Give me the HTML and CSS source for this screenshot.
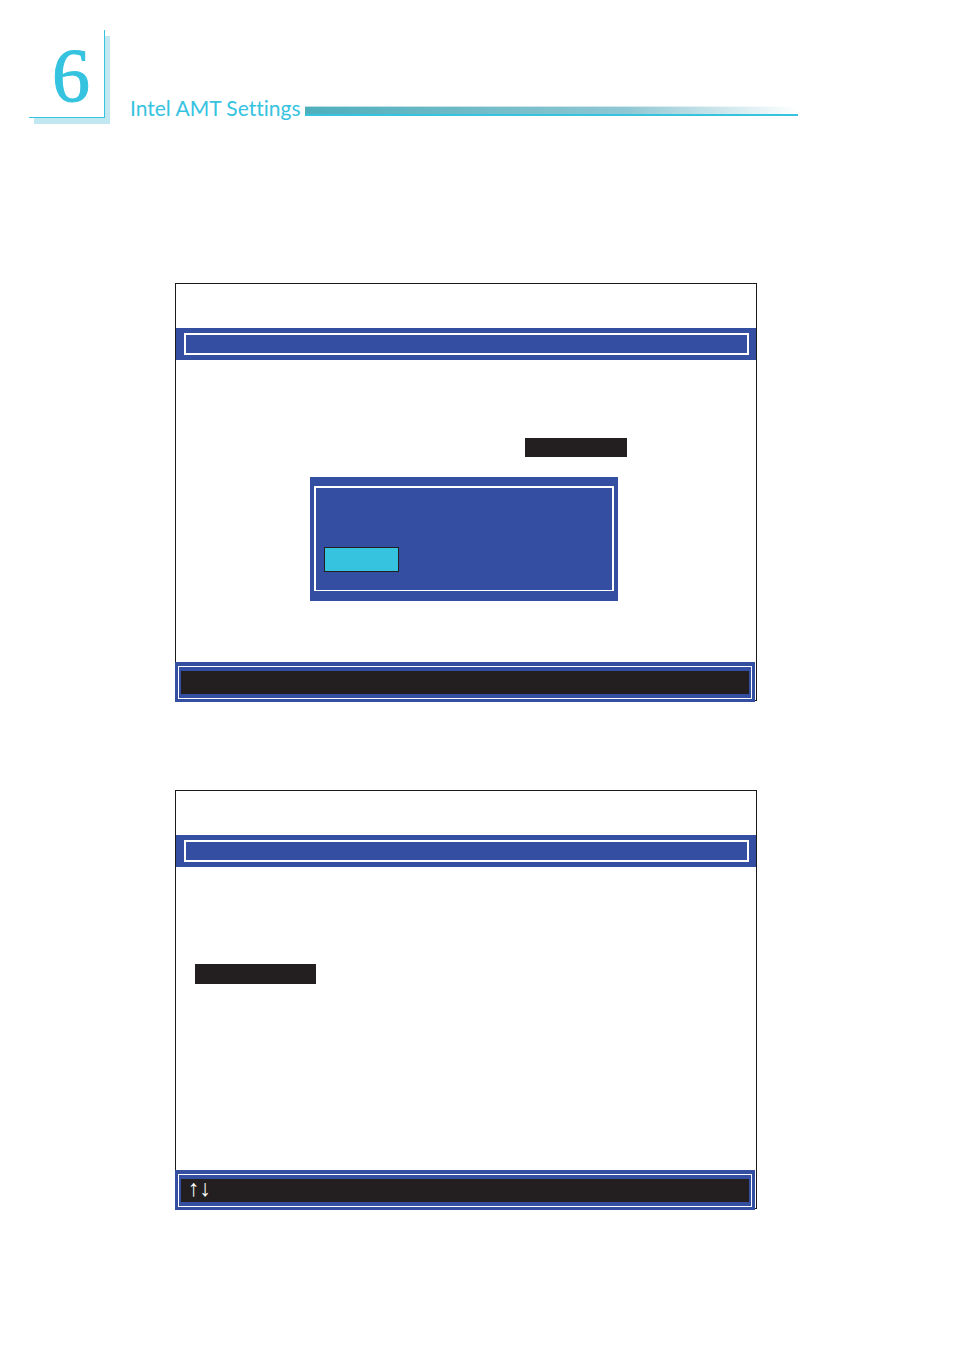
FILE: index.html
```html
<!DOCTYPE html>
<html lang="en">
<head>
  <meta charset="UTF-8" />
  <meta name="viewport" content="width=device-width, initial-scale=1.0"/>
  <title>Intel AMT Settings</title>
  <link rel="stylesheet" href="styles.css">
</head>
<body>
  <header class="page-header">
    <div class="chapter">6</div>
    <h1 class="title">Intel AMT Settings</h1>
    <div class="title-rule"></div>
  </header>

  <main class="screens">
    <!-- screen with dialog -->
    <section class="screen">
      <div class="screen-bar"><div class="bar-frame"></div></div>
      <div class="screen-body">
        <div class="selected-value"></div>
        <div class="dialog">
          <div class="dialog-frame">
            <button class="dialog-button" type="button" aria-label="OK"></button>
          </div>
        </div>
      </div>
      <div class="screen-footer">
        <div class="footer-frame"><p class="keys"></p></div>
      </div>
    </section>

    <!-- screen with menu -->
    <section class="screen">
      <div class="screen-bar"><div class="bar-frame"></div></div>
      <div class="screen-body menu-body">
        <div class="selected-item"></div>
      </div>
      <div class="screen-footer">
        <div class="footer-frame"><p class="keys">↑↓</p></div>
      </div>
    </section>
  </main>
</body>
</html>
```
FILE: styles.css
```css
* {
  box-sizing: border-box;
  margin: 0;
  padding: 0;
}

body {
  background: #fff;
  color: #231f20;
  font-family: Lato, sans-serif;
}

.page-header {
  display: flex;
  align-items: flex-end;
  max-width: 798px;
  padding: 30px 0 0 29px;
}

.chapter {
  width: 76px;
  height: 88px;
  padding-left: 23px;
  background: #fff;
  border-right: 1px solid #35c3df;
  border-bottom: 1px solid #35c3df;
  box-shadow: 5px 6px 0 #c1e7f0;
  color: #35c3df;
  font-family: "Liberation Serif", serif;
  font-size: 76px;
  line-height: 90px;
  -webkit-text-stroke: 1px #35c3df;
}

.title {
  margin-left: 25px;
  color: #35c3df;
  font-size: 21px;
  font-weight: 400;
  font-variant-ligatures: none;
  line-height: 20px;
  white-space: nowrap;
}

.title-rule {
  flex: 1;
  height: 10px;
  margin: 0 0 2px 4px;
  background: linear-gradient(to right, #4fafbc, #8fc7d3 65%, #fff);
  border-top: 1px solid rgba(255, 255, 255, 0.6);
  border-bottom: 2px solid #35c3df;
}

.screens {
  display: flex;
  flex-direction: column;
  gap: 89px;
  max-width: 757px;
  padding: 165px 0 140px 175px;
}

.screen {
  padding-top: 44px;
  border: 1px solid #1a1a1a;
}

.screen-bar {
  height: 32px;
  padding: 5px 7px 5px 8px;
  background: #344ea1;
}

.bar-frame {
  height: 22px;
  border: 2px solid #fff;
}

.screen-body {
  display: flex;
  flex-direction: column;
  align-items: flex-start;
  min-height: 302px;
  padding-top: 78px;
}

.selected-value {
  width: 102px;
  height: 19px;
  margin-left: 349px;
  background: #231f20;
}

.dialog {
  width: 308px;
  margin: 20px 0 0 134px;
  padding: 9px 4px 10px;
  background: #344ea1;
}

.dialog-frame {
  padding: 59px 8px 18px;
  border: 2px solid #fff;
  border-bottom-width: 1px;
}

.dialog-button {
  display: block;
  width: 75px;
  height: 25px;
  background: #35c3df;
  border: 1px solid #231f20;
}

.menu-body {
  min-height: 303px;
  padding: 97px 0 0 19px;
}

.selected-item {
  width: 121px;
  height: 20px;
  background: #231f20;
}

/* the footer sticks out over the screen border */
.screen-footer {
  margin: 0 1px -2px -1px;
  padding: 4px 3px 3px;
  background: #344ea1;
}

.footer-frame {
  padding: 4px 2px;
  border: 1px solid #fff;
}

.keys {
  height: 23px;
  padding-left: 7px;
  background: #231f20;
  color: #fff;
  font-family: "Liberation Serif", serif;
  font-size: 23px;
  line-height: 19px;
}
```
